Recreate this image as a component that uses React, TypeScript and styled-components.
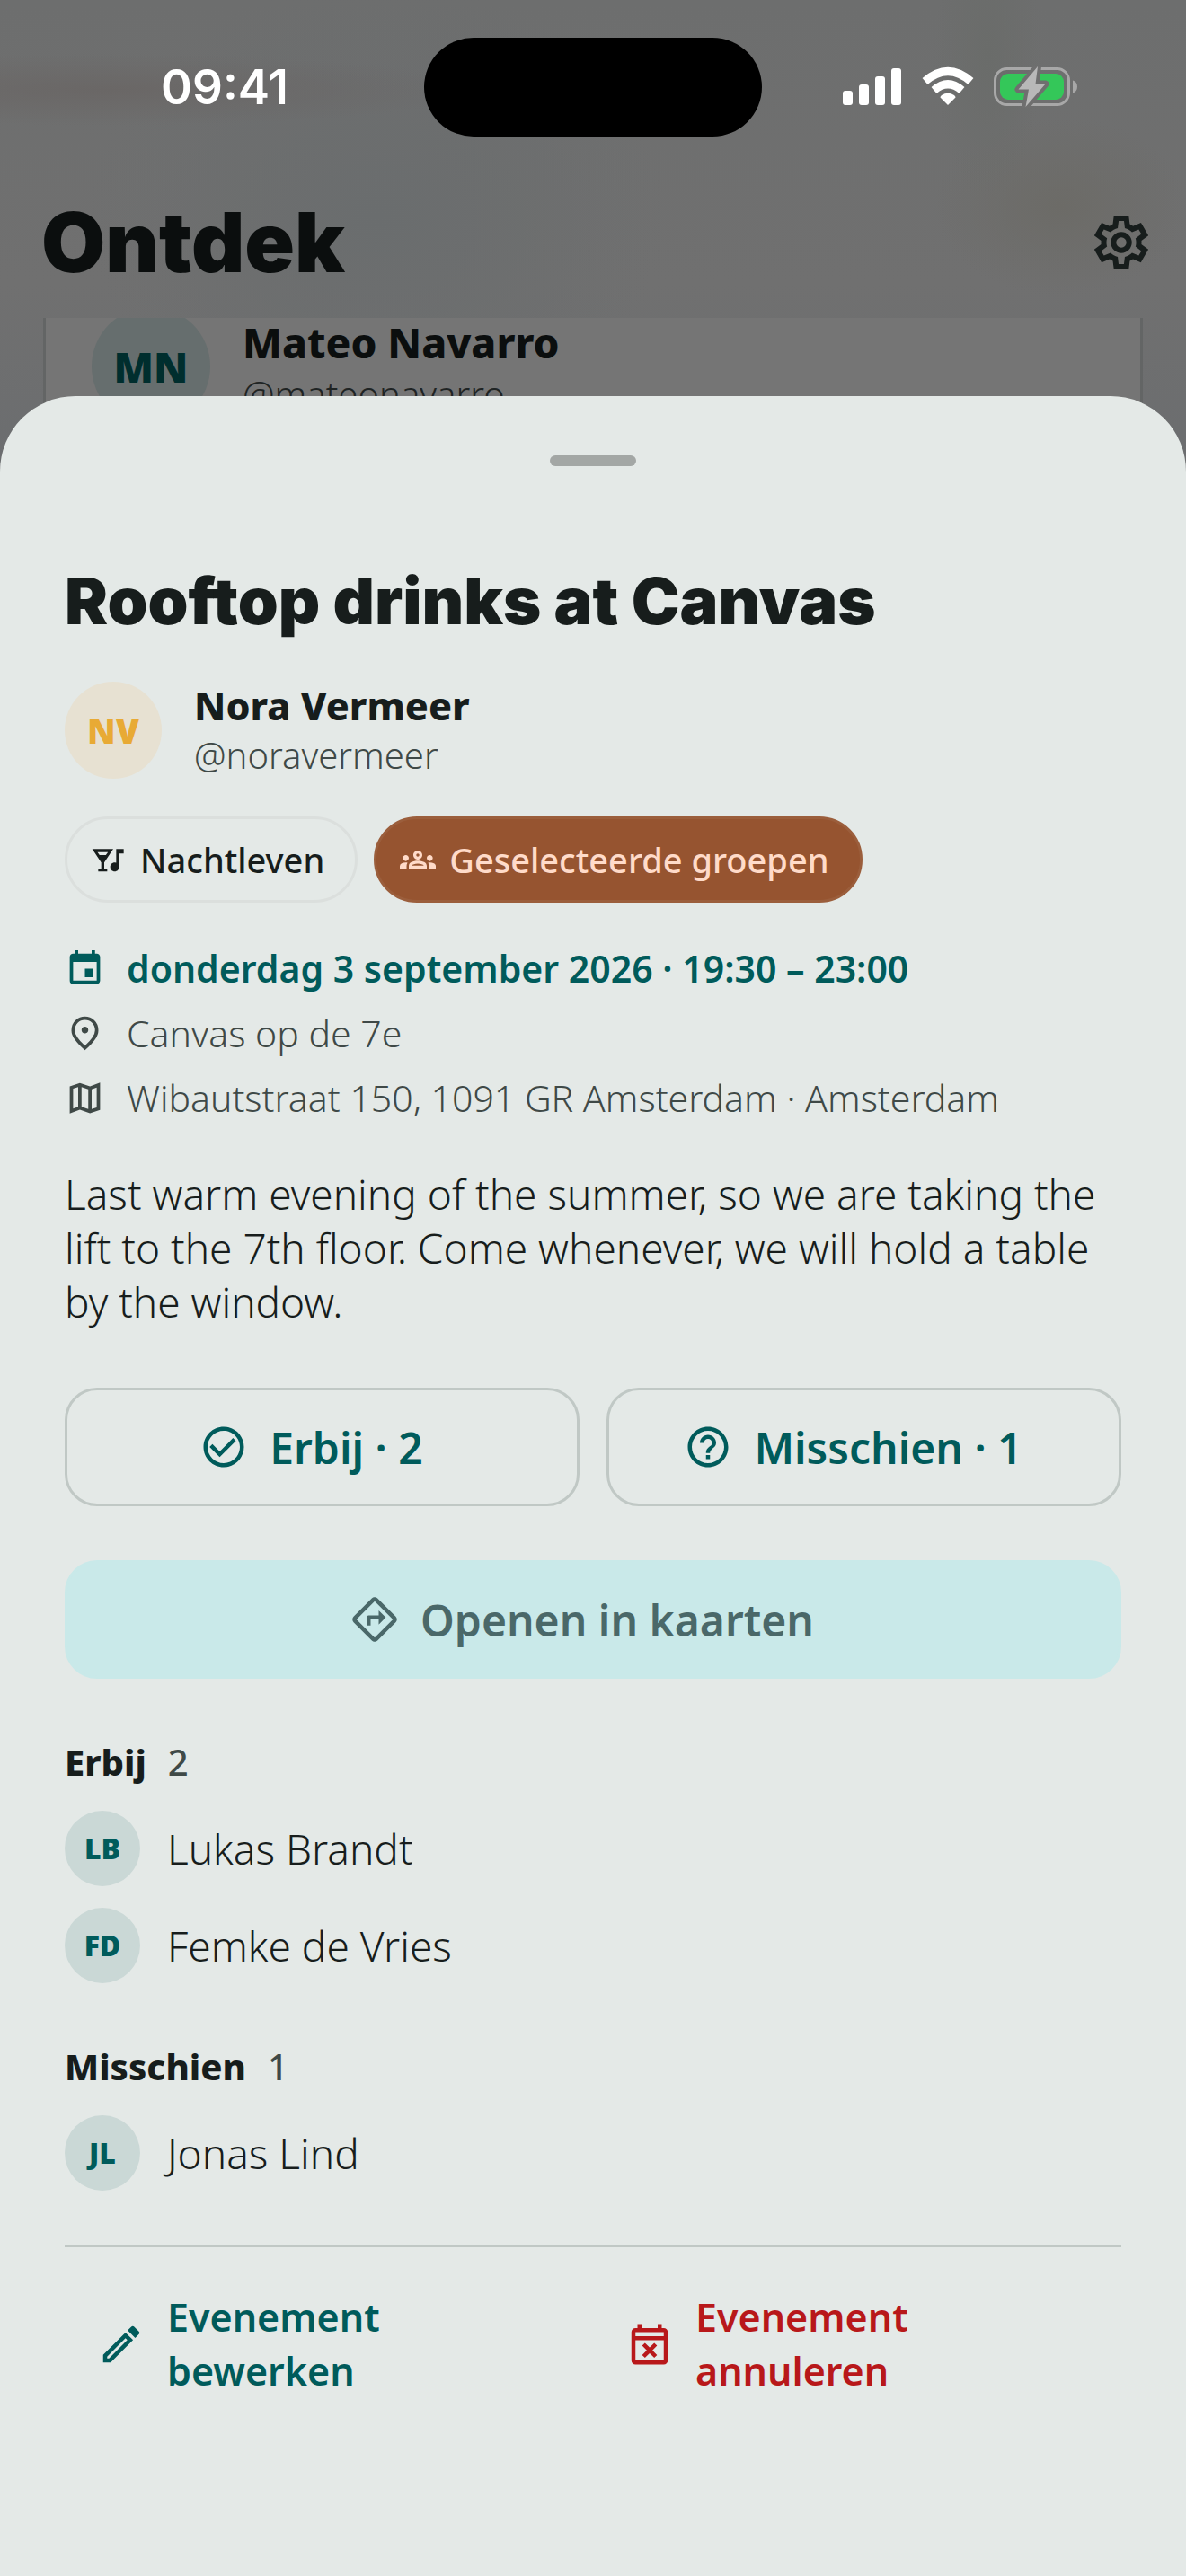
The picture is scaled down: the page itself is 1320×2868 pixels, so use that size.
import React from "react";
import styled, { createGlobalStyle } from "styled-components";
import {
  MdCheckCircleOutline,
  MdEvent,
  MdHelpOutline,
  MdNightlife,
  MdOutlineDirections,
  MdOutlineGroups,
} from "react-icons/md";

const c = {
  ink: "#171d1c",
  muted: "#3f4947",
  teal: "#005b5b",
  line: "#c0c8c5",
  sheet: "#e4e9e7",
  danger: "#b8181a",
};

const display = `Inter, "Open Sans", sans-serif`;
const text = `"Noto Sans", "Open Sans", sans-serif`;

const GlobalStyle = createGlobalStyle`
  * { box-sizing: border-box; margin: 0; }
  body { background: ${c.sheet}; color: ${c.ink}; font-family: ${text}; }
  button { font: inherit; color: inherit; background: none; border: 0; padding: 0; cursor: pointer; }
  ul { list-style: none; padding: 0; }
  svg { display: block; flex: none; }
`;

const Screen = styled.div`
  min-height: 100vh;
  display: flex;
  flex-direction: column;
`;

const Backdrop = styled.div`
  background:
    radial-gradient(ellipse 420px 40px at 120px 100px, #6a6766, transparent),
    radial-gradient(ellipse 320px 260px at 420px 240px, #6a6d6e, transparent),
    radial-gradient(ellipse 60px 160px at 1100px 60px, #6a6c6a, transparent),
    radial-gradient(ellipse 140px 100px at 1180px 230px, #6c6b67, transparent),
    linear-gradient(#6d6e6e, #707070 60%, #6b6d6f);
`;

const StatusBar = styled.div`
  display: grid;
  grid-template-columns: 1fr 376px 1fr;
  align-items: center;
  padding-top: 42px;
  color: #fff;
`;

const Time = styled.time`
  padding-left: 28px;
  text-align: center;
  font: 600 53px/110px ${display};
`;

const Island = styled.div`
  height: 110px;
  border-radius: 55px;
  background: #000;
`;

const StatusIcons = styled.div`
  display: flex;
  justify-content: center;
  gap: 22px;
  padding-right: 32px;
`;

const Header = styled.header`
  display: flex;
  align-items: center;
  justify-content: space-between;
  height: 84px;
  margin-top: 76px;
  padding: 0 36px 0 46px;
`;

const PageTitle = styled.h1`
  font: 900 92px/84px ${display};
  color: #0b0e0e;
`;

const SettingsButton = styled.button`
  color: #171d1c;
`;

const PeekCard = styled.article`
  height: 171px;
  margin: 42px 48px 0;
  padding: 0 51px;
  overflow: hidden;
  background: #757575;
  border: solid #636565;
  border-width: 0 3px;
`;

const Person = styled.div<{ $gap: number; $lift?: number }>`
  display: flex;
  align-items: center;
  gap: ${(p) => p.$gap}px;
  margin-top: ${(p) => -(p.$lift ?? 0)}px;
`;

const tones = {
  dim: ["#666e6e", "#002e2e"],
  amber: ["#e7e1d2", "#e8aa35"],
  teal: ["#cad8d6", c.teal],
};

const Avatar = styled.span<{ $size: number; $font: number; $tone: keyof typeof tones }>`
  display: grid;
  place-items: center;
  flex: none;
  width: ${(p) => p.$size}px;
  height: ${(p) => p.$size}px;
  border-radius: 50%;
  background: ${(p) => tones[p.$tone][0]};
  color: ${(p) => tones[p.$tone][1]};
  font-size: ${(p) => p.$font}px;
  font-weight: 900;
`;

const PersonName = styled.p<{ $large?: boolean }>`
  font-size: ${(p) => (p.$large ? 46 : 43)}px;
  line-height: ${(p) => (p.$large ? 62 : 56)}px;
  font-weight: 800;
  color: ${(p) => (p.$large ? "#0b0e0e" : c.ink)};
`;

const Handle = styled.p<{ $large?: boolean }>`
  font-size: 40px;
  line-height: 54px;
  font-weight: 300;
  color: ${(p) => (p.$large ? "#1f2424" : c.muted)};
`;

const Sheet = styled.main`
  position: relative;
  flex: 1;
  display: flex;
  flex-direction: column;
  margin-top: -84px;
  padding: 66px 72px 72px;
  border-radius: 84px 84px 0 0;
  background: ${c.sheet};
`;

const Grip = styled.div`
  align-self: center;
  width: 96px;
  height: 12px;
  border-radius: 6px;
  background: #a3a7a5;
`;

const EventTitle = styled.h2`
  margin: 108px 0 47px;
  font: 900 72px/84px ${display};
`;

const Chips = styled.ul`
  display: flex;
  gap: 18px;
  margin: 41px 0 46px;
`;

const Chip = styled.li<{ $filled?: boolean }>`
  display: flex;
  align-items: center;
  gap: 15px;
  height: 96px;
  padding: 0 34px 0 26px;
  border: 3px solid ${(p) => (p.$filled ? "#9b5e3c" : "#dbdfdd")};
  border-radius: 48px;
  background: ${(p) => (p.$filled ? "#965430" : "transparent")};
  color: ${(p) => (p.$filled ? "#ffdbc9" : c.ink)};
  font-size: 38px;
  font-weight: 500;
`;

const Facts = styled.ul`
  display: grid;
  gap: 18px;
`;

const Fact = styled.li<{ $accent?: boolean }>`
  display: flex;
  align-items: center;
  gap: 24px;
  font-size: 41px;
  line-height: 54px;
  font-weight: ${(p) => (p.$accent ? 600 : 300)};
  color: ${(p) => (p.$accent ? c.teal : c.muted)};
`;

const Description = styled.p`
  margin: 50px 0 66px;
  font-size: 46px;
  line-height: 60px;
  font-weight: 300;
`;

const Responses = styled.div`
  display: grid;
  grid-template-columns: 1fr 1fr;
  gap: 30px;
  margin-bottom: 60px;
`;

const ActionButton = styled.button<{ $tonal?: boolean }>`
  display: flex;
  align-items: center;
  justify-content: center;
  gap: 24px;
  height: 132px;
  padding: 0 72px 0 48px;
  border: 3px solid ${(p) => (p.$tonal ? "#c9e9e9" : c.line)};
  border-radius: 36px;
  background: ${(p) => (p.$tonal ? "#c9e9e9" : "transparent")};
  color: ${(p) => (p.$tonal ? "#4a6869" : c.teal)};
  font-size: 48px;
  font-weight: 600;
`;

const Group = styled.section`
  margin-top: 66px;
`;

const GroupHead = styled.div`
  display: flex;
  gap: 24px;
  margin-bottom: 27px;
  font-size: 40px;
  line-height: 54px;
`;

const GroupTitle = styled.h3`
  font: inherit;
  font-weight: 800;
`;

const Count = styled.span`
  font-weight: 500;
  color: ${c.muted};
`;

const Guests = styled.ul`
  display: grid;
  gap: 24px;
`;

const Guest = styled.li`
  display: flex;
  align-items: center;
  gap: 30px;
  font-size: 46px;
  line-height: 60px;
  font-weight: 300;
`;

const Footer = styled.footer`
  display: grid;
  grid-template-columns: 1fr 1fr;
  margin-top: 60px;
  padding-top: 48px;
  border-top: 3px solid ${c.line};
`;

const FooterButton = styled.button<{ $danger?: boolean }>`
  display: flex;
  align-items: center;
  gap: 24px;
  padding: 0 200px 0 36px;
  text-align: left;
  font-size: 43px;
  line-height: 60px;
  font-weight: 600;
  color: ${(p) => (p.$danger ? c.danger : c.teal)};
`;

function Symbol({ d, size }: { d: string; size: number }) {
  return (
    <svg width={size} height={size} viewBox="0 -960 960 960" fill="currentColor" aria-hidden="true">
      <path d={d} />
    </svg>
  );
}

const pinPath =
  "M480-480q33 0 56.5-23.5T560-560t-23.5-56.5T480-640t-56.5 23.5T400-560t23.5 56.5T480-480Zm0 294q122-112 181-203.5T720-552q0-109-69.5-178.5T480-800t-170.5 69.5T240-552q0 71 59 162.5T480-186Zm0 106Q319-217 239.5-334.5T160-552q0-150 96.5-239T480-880t223.5 89T800-552q0 100-79.5 217.5T480-80Z";
const mapPath =
  "m600-120-240-84-240 92v-648l240-80 240 84 240-92v648l-240 80Zm-40-98v-468l-160-56v468l160 56Zm80 0 120-40v-474l-120 46v468Zm-440-10 120-46v-468l-120 40v474Z";
const busyPath =
  "m388-212-56-56 92-92-92-92 56-56 92 92 92-92 56 56-92 92 92 92-56 56-92-92-92 92ZM200-80q-33 0-56.5-23.5T120-160v-560q0-33 23.5-56.5T200-800h40v-80h80v80h320v-80h80v80h40q33 0 56.5 23.5T840-720v560q0 33-23.5 56.5T760-80H200Zm0-80h560v-400H200v400Zm0-480h560v-80H200v80Z";
const gearPath =
  "m370-80-16-128q-13-5-24.5-12T307-235l-119 50L78-375l103-78q-1-7-1-13.5v-27q0-6.5 1-13.5L78-585l110-190 119 50q11-8 23-15t24-12l16-128h220l16 128q13 5 24.5 12t22.5 15l119-50 110 190-103 78q1 7 1 13.5v27q0 6.5-2 13.5l103 78-110 190-118-50q-11 8-23 15t-24 12L590-80H370Zm70-80h79l14-106q31-8 57.5-23.5T639-327l99 41 39-68-86-65q5-14 7-29.5t2-31.5q0-16-2-31.5t-7-29.5l86-65-39-68-99 42q-22-23-48.5-38.5T533-694l-13-106h-79l-14 106q-31 8-57.5 23.5T321-633l-99-41-39 68 86 64q-5 15-7 30t-2 32q0 16 2 31t7 30l-86 65 39 68 99-42q22 23 48.5 38.5T427-266l13 106Z";

const Gear = () => (
  <svg width="72" height="72" viewBox="0 -960 960 960" fill="currentColor" aria-hidden="true">
    <path d={gearPath} />
    <circle cx="480" cy="-480" r="116" fill="none" stroke="currentColor" strokeWidth="80" />
  </svg>
);

const Pencil = () => (
  <svg width="54" height="54" viewBox="0 0 24 24" fill="currentColor" aria-hidden="true">
    <path d="M14.06 9.02l.92.92L5.92 19H5v-.92l9.06-9.06M17.66 3c-.25 0-.51.1-.7.29l-1.83 1.83 3.75 3.75 1.83-1.83c.39-.39.39-1.02 0-1.41l-2.34-2.34c-.2-.2-.45-.29-.71-.29zm-3.6 3.19L3 17.25V21h3.75L17.81 9.94l-3.75-3.75z" />
  </svg>
);

const Signal = () => (
  <svg width="66" height="44" viewBox="0 0 66 44" fill="#fff" aria-hidden="true">
    <rect x="0" y="27" width="11" height="16" rx="3" />
    <rect x="18" y="20" width="11" height="23" rx="3" />
    <rect x="36" y="11" width="11" height="32" rx="3" />
    <rect x="54" y="2" width="11" height="41" rx="3" />
  </svg>
);

const Wifi = () => (
  <svg width="58" height="44" viewBox="0 0 58 44" fill="none" aria-hidden="true">
    <path d="M29 43 20.5 34.5Q20.5 33 22 32Q29 27.500 36 32Q37.500 33 37.500 34.500Z" fill="#fff" />
    <path d="M13.500 26.500Q29 13 44.500 26.500" stroke="#fff" strokeWidth="9" />
    <path d="M3.500 16.500Q29-5.500 54.500 16.500" stroke="#fff" strokeWidth="9" />
  </svg>
);

const Battery = () => (
  <svg width="93" height="46" viewBox="0 0 93 46" fill="none" aria-hidden="true">
    <rect x="1.500" y="2.500" width="82" height="40" rx="13" stroke="#a8a8a8" strokeWidth="3" />
    <path d="M88 15.500Q93 17 93 22.500T88 29.500Z" fill="#a8a8a8" />
    <rect x="7" y="8" width="71" height="29" rx="9" fill="#34c759" />
    <path d="M49 0 27.500 25.500H39L35.500 45 57.500 19.500H46.500Z" fill="#b8b8b8" stroke="#6f6f6f" strokeWidth="8" strokeLinejoin="round" paintOrder="stroke" />
  </svg>
);

const groups = [
  { title: "Erbij", guests: [["LB", "Lukas Brandt"], ["FD", "Femke de Vries"]] },
  { title: "Misschien", guests: [["JL", "Jonas Lind"]] },
];

export default function App() {
  return (
    <Screen>
      <GlobalStyle />
      <Backdrop>
        <StatusBar>
          <Time>09:41</Time>
          <Island />
          <StatusIcons>
            <Signal />
            <Wifi />
            <Battery />
          </StatusIcons>
        </StatusBar>
        <Header>
          <PageTitle>Ontdek</PageTitle>
          <SettingsButton type="button" aria-label="Instellingen">
            <Gear />
          </SettingsButton>
        </Header>
        <PeekCard>
          <Person $gap={36} $lift={12}>
            <Avatar $size={132} $font={46} $tone="dim">MN</Avatar>
            <div>
              <PersonName $large>Mateo Navarro</PersonName>
              <Handle $large>@mateonavarro</Handle>
            </div>
          </Person>
        </PeekCard>
      </Backdrop>

      <Sheet>
        <Grip />
        <EventTitle>Rooftop drinks at Canvas</EventTitle>
        <Person $gap={36}>
          <Avatar $size={108} $font={38} $tone="amber">NV</Avatar>
          <div>
            <PersonName>Nora Vermeer</PersonName>
            <Handle>@noravermeer</Handle>
          </div>
        </Person>

        <Chips>
          <Chip>
            <MdNightlife size={40} />
            Nachtleven
          </Chip>
          <Chip $filled>
            <MdOutlineGroups size={40} />
            Geselecteerde groepen
          </Chip>
        </Chips>

        <Facts>
          <Fact $accent>
            <MdEvent size={45} />
            donderdag 3 september 2026 · 19:30 – 23:00
          </Fact>
          <Fact>
            <Symbol d={pinPath} size={45} />
            Canvas op de 7e
          </Fact>
          <Fact>
            <Symbol d={mapPath} size={45} />
            Wibautstraat 150, 1091 GR Amsterdam · Amsterdam
          </Fact>
        </Facts>

        <Description>
          Last warm evening of the summer, so we are taking the lift to the 7th floor. Come whenever, we will hold a
          table by the window.
        </Description>

        <Responses>
          <ActionButton type="button">
            <MdCheckCircleOutline size={54} />
            Erbij · 2
          </ActionButton>
          <ActionButton type="button">
            <MdHelpOutline size={54} />
            Misschien · 1
          </ActionButton>
        </Responses>
        <ActionButton type="button" $tonal>
          <MdOutlineDirections size={54} />
          Openen in kaarten
        </ActionButton>

        {groups.map((group) => (
          <Group key={group.title}>
            <GroupHead>
              <GroupTitle>{group.title}</GroupTitle>
              <Count>{group.guests.length}</Count>
            </GroupHead>
            <Guests>
              {group.guests.map(([initials, name]) => (
                <Guest key={name}>
                  <Avatar $size={84} $font={32} $tone="teal">{initials}</Avatar>
                  {name}
                </Guest>
              ))}
            </Guests>
          </Group>
        ))}

        <Footer>
          <FooterButton type="button">
            <Pencil />
            Evenement bewerken
          </FooterButton>
          <FooterButton type="button" $danger>
            <Symbol d={busyPath} size={54} />
            Evenement annuleren
          </FooterButton>
        </Footer>
      </Sheet>
    </Screen>
  );
}
